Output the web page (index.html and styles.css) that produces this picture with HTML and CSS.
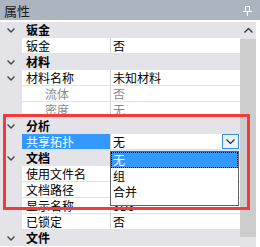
FILE: index.html
```html
<!DOCTYPE html>
<html lang="zh">
  <head>
    <meta charset="utf-8" />
    <title>属性</title>
    <link rel="stylesheet" href="styles.css">
  </head>
  <body>
    <div class="panel">
      <div class="titlebar">
        <span>属性</span>
        <!-- pin icon -->
        <svg class="pin" width="9" height="10" viewBox="0 0 9 10">
          <path d="M2.5 0.5h4v5h-4z M0 5.5h9 M4.5 5.5v4.5" fill="none" stroke="#fff" stroke-width="1" />
        </svg>
      </div>

      <div class="body">
        <div class="grid">
          <div class="row cat">
            <div class="gutter"><svg class="chev" width="8" height="5" viewBox="0 0 8 5"><path d="M0.5 0.5l3.5 3.5 3.5-3.5" fill="none" stroke="#444" stroke-width="1.3"/></svg></div>
            <div class="cat-name">钣金</div>
          </div>
          <div class="row">
            <div class="gutter"></div>
            <div class="name">钣金</div>
            <div class="value">否</div>
          </div>

          <div class="row cat">
            <div class="gutter"><svg class="chev" width="8" height="5" viewBox="0 0 8 5"><path d="M0.5 0.5l3.5 3.5 3.5-3.5" fill="none" stroke="#444" stroke-width="1.3"/></svg></div>
            <div class="cat-name">材料</div>
          </div>
          <div class="row">
            <div class="gutter"><svg class="chev" width="8" height="5" viewBox="0 0 8 5"><path d="M0.5 0.5l3.5 3.5 3.5-3.5" fill="none" stroke="#444" stroke-width="1.3"/></svg></div>
            <div class="name">材料名称</div>
            <div class="value">未知材料</div>
          </div>
          <div class="row off">
            <div class="gutter"></div>
            <div class="name sub">流体</div>
            <div class="value">否</div>
          </div>
          <div class="row off">
            <div class="gutter"></div>
            <div class="name sub">密度</div>
            <div class="value">无</div>
          </div>

          <div class="row cat">
            <div class="gutter"><svg class="chev" width="8" height="5" viewBox="0 0 8 5"><path d="M0.5 0.5l3.5 3.5 3.5-3.5" fill="none" stroke="#444" stroke-width="1.3"/></svg></div>
            <div class="cat-name">分析</div>
          </div>
          <div class="row active">
            <div class="gutter"></div>
            <div class="name">共享拓扑</div>
            <div class="value">
              <span>无</span>
              <div class="drop-btn"><svg width="9" height="5" viewBox="0 0 9 5"><path d="M0.5 0.5l4 4 4-4" fill="none" stroke="#333" stroke-width="1.2"/></svg></div>
            </div>
          </div>

          <div class="row cat">
            <div class="gutter"><svg class="chev" width="8" height="5" viewBox="0 0 8 5"><path d="M0.5 0.5l3.5 3.5 3.5-3.5" fill="none" stroke="#444" stroke-width="1.3"/></svg></div>
            <div class="cat-name">文档</div>
          </div>
          <div class="row">
            <div class="gutter"></div>
            <div class="name">使用文件名</div>
            <div class="value"></div>
          </div>
          <div class="row">
            <div class="gutter"></div>
            <div class="name">文档路径</div>
            <div class="value"></div>
          </div>
          <div class="row">
            <div class="gutter"></div>
            <div class="name">显示名称</div>
            <div class="value">3D3</div>
          </div>
          <div class="row">
            <div class="gutter"></div>
            <div class="name">已锁定</div>
            <div class="value">否</div>
          </div>

          <div class="row cat">
            <div class="gutter"><svg class="chev" width="8" height="5" viewBox="0 0 8 5"><path d="M0.5 0.5l3.5 3.5 3.5-3.5" fill="none" stroke="#444" stroke-width="1.3"/></svg></div>
            <div class="cat-name">文件</div>
          </div>
        </div>

        <div class="scrollbar">
          <div class="sb-up"><svg width="9" height="5" viewBox="0 0 9 5"><path d="M0.5 4.5l4-4 4 4" fill="none" stroke="#333" stroke-width="1.3"/></svg></div>
          <div class="sb-track"></div>
          <div class="sb-thumb"></div>
        </div>
      </div>

      <!-- open dropdown list of the selected row -->
      <div class="drop-list">
        <div class="opt picked">无</div>
        <div class="opt">组</div>
        <div class="opt">合并</div>
      </div>

      <!-- red annotation box -->
      <div class="mark"></div>
    </div>
  </body>
</html>
```

FILE: styles.css
```css
body {
  margin: 0;
  background: #fff;
  font-family: "Noto Sans CJK SC", "Liberation Sans", sans-serif;
  font-size: 12px;
  color: #000;
}

.panel {
  position: relative;
  width: 260px;
  height: 247px;
  overflow: hidden;
  background: #fff;
}

.titlebar {
  height: 20px;
  background: #abb4bf;
  display: flex;
  align-items: center;
  justify-content: space-between;
  padding: 0 8px 0 4px;
  font-size: 13px;
  color: #1c1c1c;
  border-bottom: 2px solid #fff;
}

.pin {
  margin-top: 1px;
}

.body {
  display: flex;
  height: 225px;
  padding-right: 4px;
}

.grid {
  width: 240px;
}

.row {
  display: flex;
  height: 16px;
  line-height: 15px;
}

.gutter {
  width: 22px;
  flex: none;
  background: #e3e3e8;
  display: flex;
  align-items: center;
  padding-left: 7px;
  box-sizing: border-box;
}

.cat {
  background: #e3e3e8;
}

.cat-name {
  font-weight: bold;
  padding-left: 4px;
}

.name {
  width: 89px;
  flex: none;
  padding-left: 4px;
  box-sizing: border-box;
  border-right: 1px solid #d4d4d4;
  border-bottom: 1px solid #e2e2e2;
}

.name.sub {
  padding-left: 23px;
}

.value {
  flex: 1;
  padding-left: 2px;
  border-bottom: 1px solid #e2e2e2;
  display: flex;
  justify-content: space-between;
  align-items: center;
}

.off .name,
.off .value {
  color: #8a8a8a;
}

.active .name {
  background: #3399ff;
  color: #fff;
}

.drop-btn {
  width: 15px;
  height: 13px;
  border: 1px solid #3c8ddb;
  background: #e8f2fb;
  display: flex;
  align-items: center;
  justify-content: center;
  margin-right: 1px;
}

.scrollbar {
  width: 16px;
  display: flex;
  flex-direction: column;
}

.sb-up {
  height: 17px;
  background: #e3e3e8;
  display: flex;
  align-items: center;
  justify-content: center;
}

.sb-track {
  flex: 1;
  background: #cdcdcd;
}

.sb-thumb {
  height: 10px;
  background: #e3e3e8;
}

.drop-list {
  position: absolute;
  left: 110px;
  top: 151px;
  width: 127px;
  height: 53px;
  border: 1px solid #646464;
  background: #fff;
}

.opt {
  height: 16px;
  line-height: 16px;
  padding-left: 2px;
}

.opt.picked {
  background: #3399ff;
  color: #fff;
  outline: 1px dotted #000;
  outline-offset: -1px;
}

.mark {
  position: absolute;
  left: 3px;
  top: 114px;
  width: 241px;
  height: 90px;
  border: 3px solid #f23b3b;
}
```
